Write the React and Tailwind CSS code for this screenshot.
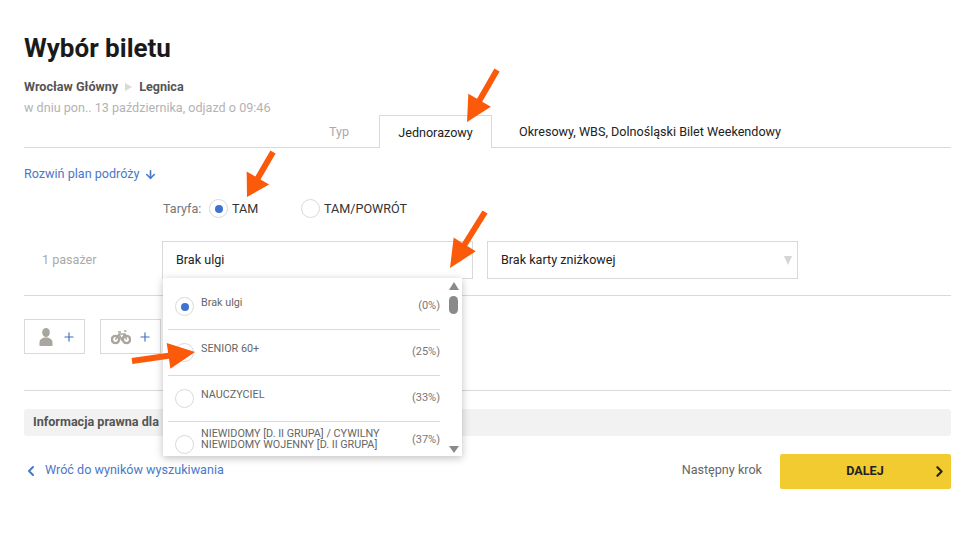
import { ArrowDown, ChevronLeft, ChevronRight, Plus } from "lucide-react"

const options = [
  { label: "Brak ulgi", pct: "(0%)", checked: true, cls: "h-[52px] pt-[16px]" },
  { label: "SENIOR 60+", pct: "(25%)", cls: "h-[46px] pt-[10px]" },
  { label: "NAUCZYCIEL", pct: "(33%)", cls: "h-[46px] pt-[10px]" },
  { label: "NIEWIDOMY [D. II GRUPA] / CYWILNY NIEWIDOMY WOJENNY [D. II GRUPA]", pct: "(37%)", cls: "h-[34px] pt-[6px]", last: true },
]

const Radio = ({ checked, className = "" }) => (
  <span className={`flex h-[19px] w-[19px] shrink-0 items-center justify-center rounded-full border border-[#d9d9d9] bg-white ${className}`}>
    {checked && <span className="h-[8px] w-[8px] rounded-full bg-[#3f73d3]" />}
  </span>
)

// thick orange pointer, worked out from tail and tip inside an 80x80 box
const Arrow = ({ className, tail, tip }) => {
  const dx = tip[0] - tail[0]
  const dy = tip[1] - tail[1]
  const len = Math.hypot(dx, dy)
  const ux = dx / len
  const uy = dy / len
  const nx = -uy
  const ny = ux
  const headX = tip[0] - ux * len * 0.42
  const headY = tip[1] - uy * len * 0.42
  const pts = [
    [tail[0] + nx * 3, tail[1] + ny * 3],
    [headX + nx * 3, headY + ny * 3],
    [headX + nx * 13, headY + ny * 13],
    tip,
    [headX - nx * 13, headY - ny * 13],
    [headX - nx * 3, headY - ny * 3],
    [tail[0] - nx * 3, tail[1] - ny * 3],
  ]
  return (
    <svg className={`absolute z-20 ${className}`} width="80" height="80" viewBox="0 0 80 80">
      <polygon points={pts.map((p) => p.join(",")).join(" ")} fill="#fb5a0a" />
    </svg>
  )
}

function BikeIcon() {
  return (
    <svg width="20" height="16" viewBox="0 0 20 16" fill="none" stroke="#a8a69e">
      <circle cx="4.5" cy="10.5" r="3.6" strokeWidth="2.4" />
      <circle cx="15.5" cy="10.5" r="3.6" strokeWidth="2.4" />
      <path d="M4.5 10.5 8 5h6l1.5 5.5M8 5l2.5 5.5L14 5M13 2h2.5M7 3h3" strokeWidth="1.6" />
    </svg>
  )
}

function PersonIcon() {
  return (
    <svg width="14" height="18" viewBox="0 0 14 18" fill="#a8a69e">
      <ellipse cx="7" cy="4.5" rx="3.8" ry="4.5" />
      <path d="M0.5 18v-3.5C0.5 11.5 3 10.5 5 9.5h4c2 1 4.5 2 4.5 5V18z" />
    </svg>
  )
}

function Dropdown() {
  return (
    <div className="absolute left-[163px] top-[278px] z-10 flex h-[178px] w-[299px] bg-white shadow-[0_2px_8px_rgba(0,0,0,0.25)]">
      <div className="w-[282px] overflow-hidden pl-[5px] pr-[5px]">
        {options.map((o) => (
          <div key={o.label} className={`flex ${o.cls} ${o.last ? "" : "border-b border-[#d9d9d9]"}`}>
            <Radio checked={o.checked} className={o.last ? "ml-[7px] mt-[7px]" : "ml-[7px] mt-[3px]"} />
            <div className={`ml-[7px] w-[195px] text-[10.8px] leading-[11px] text-[#666] ${o.last ? "" : "mt-[3px]"}`}>{o.label}</div>
            <div className="ml-auto mt-[5px] text-[11px] leading-[14px] text-[#777]">{o.pct}</div>
          </div>
        ))}
      </div>
      <div className="flex flex-1 flex-col items-center pt-[4px]">
        <span className="h-0 w-0 border-x-[5px] border-b-[8px] border-x-transparent border-b-[#8a8a8a]" />
        <span className="mt-[6px] h-[18px] w-[9px] rounded-[5px] bg-[#8a8a8a]" />
        <span className="mt-auto mb-[3px] h-0 w-0 border-x-[5px] border-t-[7px] border-x-transparent border-t-[#8a8a8a]" />
      </div>
    </div>
  )
}

export default function App() {
  return (
    <div className="relative h-[543px] overflow-hidden bg-white pl-[24px] pr-[20px] pt-[32px] font-['Roboto',sans-serif] text-[12.6px]">
      <h1 className="text-[26px] font-bold leading-[32px] text-[#1a1a1a]">Wybór biletu</h1>

      <div className="mt-[15px] flex items-center text-[12.6px] font-bold leading-[16px] text-[#555]">
        Wrocław Główny
        <span className="ml-[7px] mr-[7px] h-0 w-0 border-y-[4px] border-l-[7px] border-y-transparent border-l-[#d9d9d9]" />
        Legnica
      </div>
      <div className="mt-[5px] leading-[16px] text-[#b3b3b3]">w dniu pon.. 13 października, odjazd o 09:46</div>

      <div className="-mt-[1px] flex h-[33px] border-b border-[#d9d9d9] pl-[305px] leading-[33px]">
        <div className="w-[50px] text-[#aaa]">Typ</div>
        <div className="h-[33px] w-[113px] border-x border-t border-[#d9d9d9] bg-white text-center text-[#222]">Jednorazowy</div>
        <div className="pl-[27px] text-[#222]">Okresowy, WBS, Dolnośląski Bilet Weekendowy</div>
      </div>

      <div className="mt-[18px] flex items-center leading-[16px] text-[#4a78c8]">
        Rozwiń plan podróży
        <ArrowDown className="ml-[4px] h-[13px] w-[13px]" strokeWidth={3} />
      </div>

      <div className="mt-[17px] flex h-[20px] items-center pl-[139px] pt-[1px]">
        <span className="w-[39px] text-[#777]">Taryfa:</span>
        <Radio checked className="-mt-[2px] ml-[7px]" />
        <span className="ml-[4px] w-[26px] text-[#333]">TAM</span>
        <Radio className="-mt-[2px] ml-[43px]" />
        <span className="ml-[4px] text-[#333]">TAM/POWRÓT</span>
      </div>

      <div className="mt-[22px] flex h-[38px] items-center">
        <span className="w-[138px] pl-[18px] text-[#aaa]">1 pasażer</span>
        <div className="flex h-[38px] w-[311px] items-center border border-[#d9d9d9] pl-[13px] text-[#222]">Brak ulgi</div>
        <div className="ml-[14px] flex h-[38px] w-[311px] items-center border border-[#d9d9d9] pl-[13px] pr-[5px] text-[#222]">
          Brak karty zniżkowej
          <span className="ml-auto h-0 w-0 border-x-[4px] border-t-[9px] border-x-transparent border-t-[#d5d5d5]" />
        </div>
      </div>

      <div className="mt-[16px] border-t border-[#d9d9d9]" />

      <div className="mt-[23px] flex gap-[15px]">
        <div className="flex h-[35px] w-[61px] items-center gap-[9px] border border-[#d9d9d9] pl-[14px]">
          <PersonIcon />
          <Plus className="h-[14px] w-[14px] text-[#3f6fc4]" />
        </div>
        <div className="flex h-[35px] w-[61px] items-center gap-[7px] border border-[#d9d9d9] pl-[10px]">
          <BikeIcon />
          <Plus className="h-[14px] w-[14px] text-[#3f6fc4]" />
        </div>
      </div>

      <div className="mt-[36px] border-t border-[#d9d9d9]" />

      <div className="mt-[18px] flex h-[27px] items-center rounded-[3px] bg-[#f2f2f2] pl-[9px] font-bold text-[#555]">
        Informacja prawna dla
      </div>

      <div className="mt-[18px] flex h-[35px] items-center">
        <ChevronLeft className="-mt-[2px] -ml-[1px] h-[16px] w-[16px] text-[#4a78c8]" strokeWidth={3} />
        <span className="-mt-[2px] ml-[6px] text-[#4a78c8]">Wróć do wyników wyszukiwania</span>
        <span className="-mt-[2px] ml-auto text-[#666]">Następny krok</span>
        <div className="ml-[18px] flex h-[35px] w-[171px] items-center rounded-[2px] bg-[#f2cb30] pr-[3px]">
          <span className="flex-1 pl-[19px] text-center font-bold text-[#222]">DALEJ</span>
          <ChevronRight className="h-[17px] w-[17px] text-[#222]" strokeWidth={3} />
        </div>
      </div>

      <Dropdown />

      <Arrow className="left-[440px] top-[50px]" tail={[57, 20]} tip={[27, 72]} />
      <Arrow className="left-[220px] top-[130px]" tail={[53, 22]} tip={[27, 67]} />
      <Arrow className="left-[430px] top-[200px]" tail={[55, 12]} tip={[20, 68]} />
      <Arrow className="left-[120px] top-[320px]" tail={[12, 41]} tip={[75, 32]} />
    </div>
  )
}
